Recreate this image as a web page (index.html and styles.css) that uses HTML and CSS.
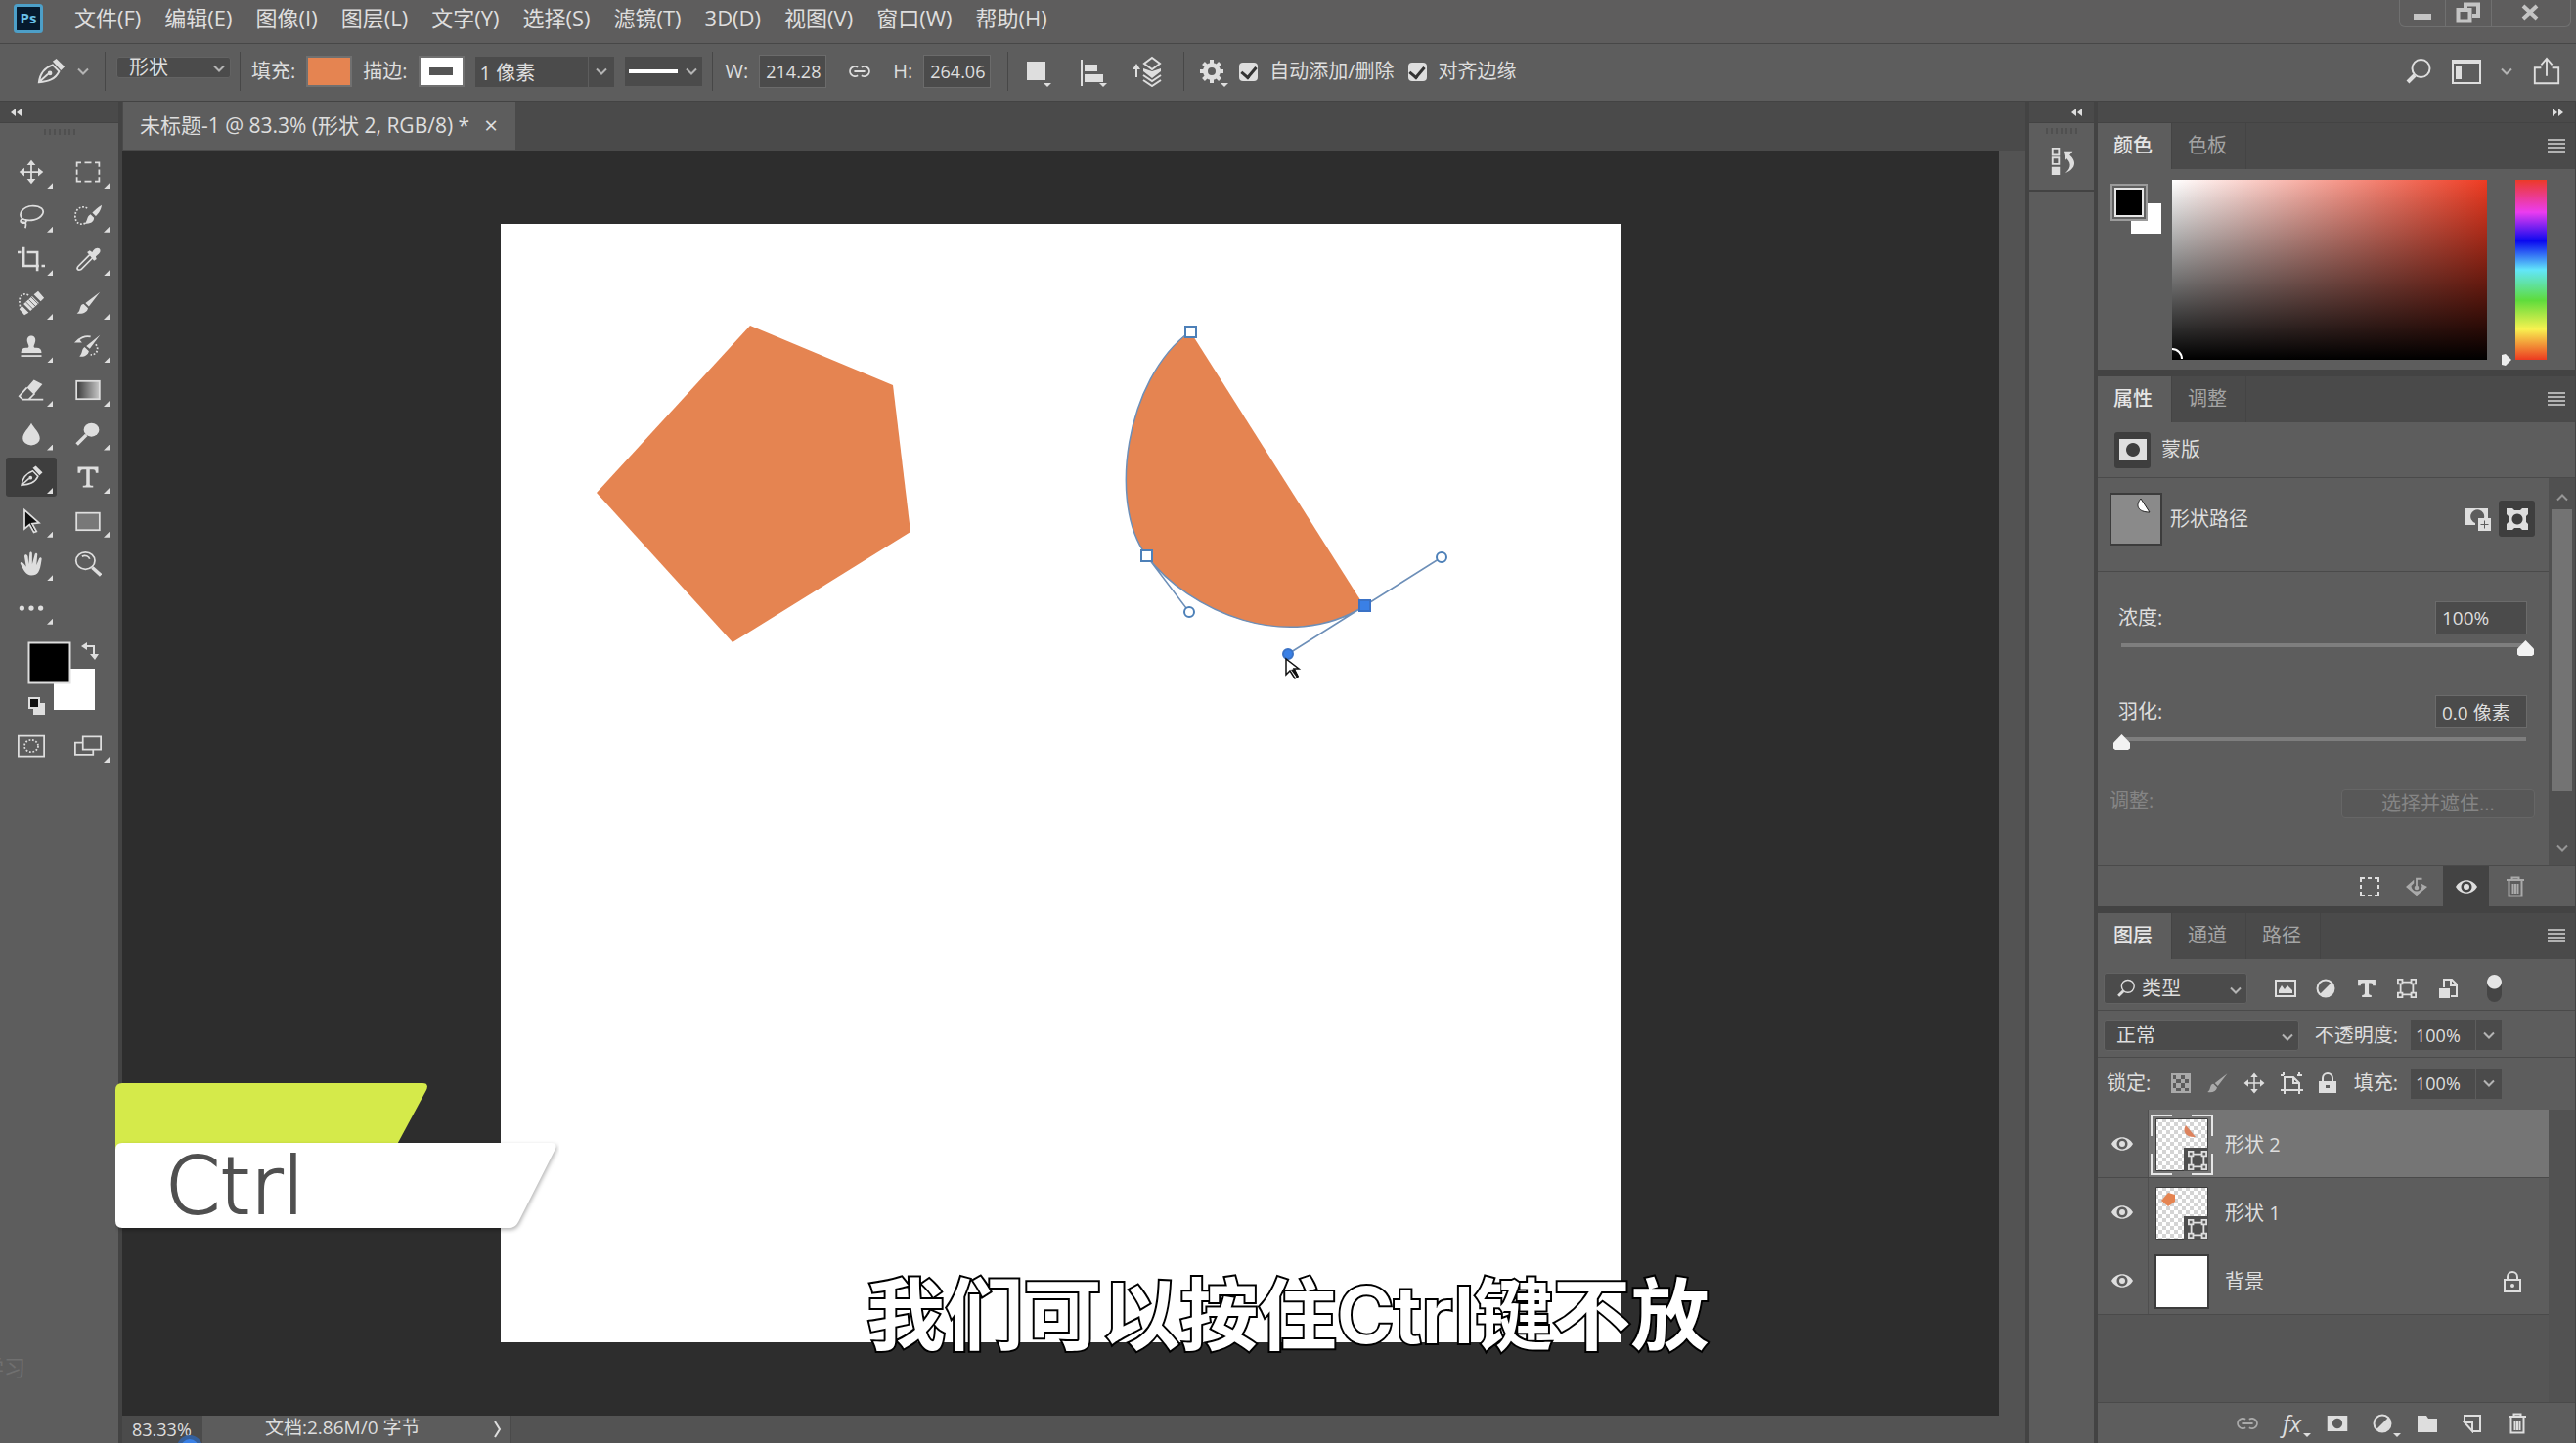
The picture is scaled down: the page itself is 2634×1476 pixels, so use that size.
FILE: index.html
```html
<!DOCTYPE html>
<html lang="zh-CN">
<head>
    <meta charset="UTF-8">
    <meta name="viewport" content="width=device-width, initial-scale=1.0">
    <title>未标题-1 @ 83.3%</title>
    <link rel="stylesheet" href="styles.css">
</head>
<body>
    <!-- shared icons -->
    <svg class="defs" aria-hidden="true">
        <symbol id="chevron" viewBox="0 0 12 8"><path d="M1 1.500l5 5 5-5"/></symbol>
        <symbol id="eye" viewBox="0 0 22 16"><path class="solid" fill-rule="evenodd" d="M0 8C5-1 17-1 22 8 17 17 5 17 0 8zM11 2.500a5.500 5.500 0 1 0 .01 0z"/><circle class="solid" cx="11" cy="8" r="3"/></symbol>
        <symbol id="trash" viewBox="0 0 20 22"><path d="M1 4h18M6.500 4V1.500h7V4M3.500 4.500V20.500h13V4.500M7.500 8v10M10 8v10M12.500 8v10"/></symbol>
        <symbol id="shape" viewBox="0 0 22 22"><path d="M4 4h14v14H4z"/><path class="box" d="M1 1h5v5H1zM16 1h5v5h-5zM1 16h5v5H1zM16 16h5v5h-5z"/></symbol>
        <symbol id="mask" viewBox="0 0 30 24"><path class="solid" fill-rule="evenodd" d="M1 1h28v22H1zM15 5a7 7 0 1 0 .01 0z"/></symbol>
        <symbol id="half" viewBox="0 0 20 20"><circle cx="10" cy="10" r="8.500"/><path class="solid" d="M16 4A8.500 8.500 0 0 1 4 16z"/></symbol>
        <symbol id="menu" viewBox="0 0 18 14"><path d="M0 1h18M0 5h18M0 9h18M0 13h18"/></symbol>
        <symbol id="brush" viewBox="0 0 32 32"><path class="solid" d="M30 3L17 20l-4-4zM11 17l5 5c-1 5-6 7-13 6 3-2 3-4 4-7 1-3 2-4 4-4z"/></symbol>
        <symbol id="move" viewBox="0 0 32 32"><path d="M16 6v20M6 16h20"/><path class="solid" d="M16 2l5 6H11zM16 30l5-6H11zM2 16l6-5v10zM30 16l-6-5v10z"/></symbol>
        <symbol id="pen" viewBox="0 0 32 32"><path d="M3 28C4 20 7 13 18 9l7 7c-4 9-12 11-22 12zM4 27l9-8"/><circle class="solid" cx="15" cy="18" r="2.500"/><path class="solid" d="M18 5l4-3 9 9-4 4z"/></symbol>
        <symbol id="search" viewBox="0 0 28 28"><circle cx="16.500" cy="11" r="9"/><path class="thick" d="M10 18l-7 7"/></symbol>
        <symbol id="link" viewBox="0 0 28 16"><path d="M12 3.500A5.500 5.500 0 1 0 12 12.500M16 3.500A5.500 5.500 0 1 1 16 12.500M8 8h12"/></symbol>
        <pattern id="checks" width="8" height="8" patternUnits="userSpaceOnUse"><path fill="#fff" d="M0 0h8v8H0z"/><path fill="#d4d4d4" d="M0 0h4v4H0zM4 4h4v4H4z"/></pattern>
    </svg>

    <header class="menu-bar">
        <svg class="logo" viewBox="0 0 30 30"><rect x="1.500" y="1.500" width="27" height="27" rx="2" fill="#06192d" stroke="#4d9fc8" stroke-width="3"/><text x="15" y="20" text-anchor="middle">Ps</text></svg>
        <nav class="menus">
            <button>文件(F)</button>
            <button>编辑(E)</button>
            <button>图像(I)</button>
            <button>图层(L)</button>
            <button>文字(Y)</button>
            <button>选择(S)</button>
            <button>滤镜(T)</button>
            <button>3D(D)</button>
            <button>视图(V)</button>
            <button>窗口(W)</button>
            <button>帮助(H)</button>
        </nav>
        <div class="window-buttons">
            <button aria-label="最小化"><svg class="icon" viewBox="0 0 26 22"><path class="solid" d="M4 12h18v6H4z"/></svg></button>
            <button aria-label="还原"><svg class="icon restore" viewBox="0 0 26 22"><path d="M10 8V2.500h13V14h-6M2.500 8h12v11.500h-12z"/></svg></button>
            <button aria-label="关闭"><svg class="icon restore" viewBox="0 0 26 22"><path d="M5 4l14 13M19 4L5 17"/></svg></button>
        </div>
    </header>

    <div class="options-bar">
        <div class="group pen-group">
            <button aria-label="钢笔工具"><svg class="icon size-30" viewBox="0 0 32 32"><use href="#pen"/></svg></button>
            <svg class="icon chevron"><use href="#chevron"/></svg>
        </div>
        <div class="group mode-group">
            <div class="drop">
                <select aria-label="模式"><option>形状</option></select>
                <svg class="icon chevron"><use href="#chevron"/></svg>
            </div>
        </div>
        <div class="group paint-group">
            <label for="fillColor">填充:</label>
            <button id="fillColor" class="swatch orange"></button>
            <label for="strokeColor">描边:</label>
            <button id="strokeColor" class="swatch line"></button>
            <div class="combo">
                <input type="text" aria-label="描边宽度" value="1 像素">
                <button aria-label="宽度列表"><svg class="icon chevron"><use href="#chevron"/></svg></button>
            </div>
            <button class="stroke-type" aria-label="描边选项"><i></i><svg class="icon chevron"><use href="#chevron"/></svg></button>
        </div>
        <div class="group size-group">
            <label for="shapeWidth">W:</label>
            <input type="text" id="shapeWidth" value="214.28">
            <button aria-label="链接宽高"><svg class="icon link"><use href="#link"/></svg></button>
            <label for="shapeHeight">H:</label>
            <input type="text" id="shapeHeight" value="264.06">
        </div>
        <div class="group path-group">
            <button aria-label="路径操作"><svg class="icon size-32" viewBox="0 0 32 32"><path class="solid" d="M4 6h19v19H4zM21 28h8l-4 4z"/></svg></button>
            <button aria-label="对齐"><svg class="icon size-32" viewBox="0 0 32 32"><path d="M5 4v27"/><path class="solid" d="M8 9h13v7H8zM8 19h19v8H8zM23 28h8l-4 4z"/></svg></button>
            <button aria-label="排列"><svg class="icon size-32" viewBox="0 0 32 32"><path d="M6 22V11M22 2l8 6-8 6-8-6zM13 20l9 6 9-6M13 25l9 6 9-6"/><path class="solid" d="M6 8l4 6H2zM13 13l9 3 9-3v3l-9 7-9-7z"/></svg></button>
        </div>
        <div class="group check-group">
            <button aria-label="选项"><svg class="icon size-32" viewBox="0 0 32 32"><circle class="gear" cx="14" cy="16" r="6.500"/><path class="teeth" d="M14 4v5M14 23v5M2 16h5M21 16h5M5.500 7.500L9 11M19 21l3.500 3.500M22.500 7.500L19 11M9 21l-3.500 3.500"/><path class="solid" d="M23 28h8l-4 4z"/></svg></button>
            <label><input type="checkbox" checked>自动添加/删除</label>
            <label><input type="checkbox" checked>对齐边缘</label>
        </div>
        <div class="view-buttons">
            <button aria-label="搜索"><svg class="icon size-28"><use href="#search"/></svg></button>
            <button aria-label="工作区"><svg class="icon size-30" viewBox="0 0 30 26"><path d="M1 2h28v23H1zM1 4h28"/><path class="solid" d="M4 7h6v14H4z"/></svg></button>
            <svg class="icon chevron"><use href="#chevron"/></svg>
            <button aria-label="共享"><svg class="icon size-30" viewBox="0 0 30 32"><path d="M9 12H2v17h26V12h-7M15 21V3M9 9l6-7 6 7"/></svg></button>
        </div>
    </div>

    <main class="workspace">
        <aside class="dock">
            <div class="dock-head left"><svg class="icon arrows" viewBox="0 0 12 8"><path class="solid" d="M5 0v8L0 4zM11 0v8L6 4z"/></svg></div>
            <div class="tools">
                <div class="grip"></div>
                <div class="tool-grid">
                    <button class="tool" aria-label="移动"><svg class="icon"><use href="#move"/></svg></button>
                    <button class="tool" aria-label="选框"><svg class="icon" viewBox="0 0 32 32"><path d="M3 10V5h5M12 5h8M24 5h5v5M29 13v6M29 22v5h-5M20 27h-8M8 27H3v-5M3 19v-6"/></svg></button>
                    <button class="tool" aria-label="套索"><svg class="icon" viewBox="0 0 32 32"><path d="M6 20C0 14 5 5 18 4c9 0 14 5 11 10-4 7-15 8-21 6M8 20c-5-2-6 4-2 4 4 1 6-3 2-4M5 23c6 0 5 3 4 7"/></svg></button>
                    <button class="tool" aria-label="快速选择"><svg class="icon" viewBox="0 0 32 32"><path class="dots" d="M15 7C10 3 1 7 1 16s7 11 12 8"/><path class="solid" d="M32 3c-1 7-4 10-7 13l-4-4c3-3 6-6 11-9zM19 14l4 4c0 5-4 7-11 7 4-4 2-8 7-11z"/></svg></button>
                    <button class="tool" aria-label="裁剪"><svg class="icon crop" viewBox="0 0 32 32"><path d="M0 8h4M7 2v22h18M11 8h12v22M28 24h4"/></svg></button>
                    <button class="tool" aria-label="吸管"><svg class="icon" viewBox="0 0 32 32"><path d="M18 11L5 24c-3 3-1 6 3 4l14-14"/><path class="solid" d="M15 8l3-2 3 2c3-7 11-6 9 0-2 3-4 4-5 5l1 3-3 2z"/></svg></button>
                    <button class="tool" aria-label="修复画笔"><svg class="icon" viewBox="0 0 32 32"><path class="dots" d="M3 20C0 8 6 3 13 7"/><path class="solid" d="M24 2l7 8-4 4-8-8zM17 8l8 8-10 9-8-8zM5 19l8 8-5 3-6-7z"/><path class="cut" d="M13 12l8 8M16 9l8 8M10 15l8 8"/></svg></button>
                    <button class="tool" aria-label="画笔"><svg class="icon"><use href="#brush"/></svg></button>
                    <button class="tool" aria-label="仿制图章"><svg class="icon" viewBox="0 0 32 32"><path class="solid" d="M12 13c-5-12 13-12 8 0-2 4-1 5 2 5 4 0 6 2 6 6H4c0-4 2-6 6-6 3 0 4-1 2-5z"/><path d="M4 27.500h24"/></svg></button>
                    <button class="tool" aria-label="历史记录画笔"><svg class="icon" viewBox="0 0 32 32"><path class="solid" d="M30 3L18 19l-4-3zM12 17l5 5c-1 5-6 7-11 6 4-4 2-8 6-11zM0 12l5-5 4 5z"/><path d="M5 9c4-4 9-5 14-4"/><path class="dots" d="M25 14c5 6 0 13-6 12"/></svg></button>
                    <button class="tool" aria-label="橡皮擦"><svg class="icon" viewBox="0 0 32 32"><path class="solid" d="M19 4l10 5-10 12-8-8z"/><path d="M11 13l-9 10 4 4h7l7-7M10 27h20"/></svg></button>
                    <button class="tool" aria-label="渐变"><svg class="icon" viewBox="0 0 32 32"><defs><linearGradient id="toneFill"><stop offset="0" stop-color="#3a3a3a"/><stop offset="1" stop-color="#c8c8c8"/></linearGradient></defs><rect x="2.500" y="5.500" width="27" height="21" fill="url(#toneFill)"/></svg></button>
                    <button class="tool" aria-label="模糊"><svg class="icon" viewBox="0 0 32 32"><path class="solid" d="M16 3c3 6 10 11 10 18a10 8 0 0 1-20 0C6 14 13 9 16 3z"/></svg></button>
                    <button class="tool" aria-label="减淡"><svg class="icon" viewBox="0 0 32 32"><ellipse class="solid" cx="20" cy="11" rx="9" ry="8"/><path class="thick" d="M14 17L3 28"/></svg></button>
                    <button class="tool active" aria-label="钢笔"><svg class="icon" viewBox="0 0 32 32"><use href="#pen" x="2" y="1" width="28" height="28"/></svg></button>
                    <button class="tool" aria-label="文字"><svg class="icon" viewBox="0 0 32 32"><path class="solid" d="M4 4h24v7h-3c0-3-1-4-3-4h-4v17c0 2 1 2 4 2v2H10v-2c3 0 4 0 4-2V7h-4c-2 0-3 1-3 4H4z"/></svg></button>
                    <button class="tool" aria-label="路径选择"><svg class="icon" viewBox="0 0 32 32"><path class="arrow" d="M8 3l17 15-8 1 5 9-3 1-5-9-6 5z"/></svg></button>
                    <button class="tool" aria-label="矩形"><svg class="icon" viewBox="0 0 32 32"><rect x="2.500" y="6.500" width="27" height="20" fill="#787878"/></svg></button>
                    <button class="tool" aria-label="抓手"><svg class="icon" viewBox="0 0 32 32"><path class="solid" d="M3 15c1-3 4 0 7 4L8 7c0-3 3-3 4 0l1 9 1-12c0-3 3-3 3 0v12l3-11c1-3 4-2 3 1l-1 11 3-7c1-3 4-2 3 1-2 14-4 18-12 18-6 0-9-6-13-14z"/></svg></button>
                    <button class="tool plain" aria-label="缩放"><svg class="icon" viewBox="0 0 32 32"><ellipse cx="13" cy="12" rx="11" ry="10"/><path d="M9 7c4-2 8 0 9 3"/><path class="thick" d="M21 20l10 9"/></svg></button>
                    <button class="tool" aria-label="更多"><svg class="icon" viewBox="0 0 32 32"><g class="solid"><circle cx="5" cy="16" r="3"/><circle cx="16" cy="16" r="3"/><circle cx="27" cy="16" r="3"/></g></svg></button>
                </div>
                <svg class="icon tool-colors" viewBox="0 0 121 80">
                    <path fill="#fff" stroke="none" d="M55 31h42v42H55z"/>
                    <path fill="#000" d="M29.500 4.500h42v41h-42z"/>
                    <path d="M87 8h9v10"/><path class="solid" d="M83 8l6-4v8zM92 16h9l-4 6z"/>
                    <path class="solid" d="M34 66h12v12H34z"/><path fill="#111" d="M30 61h10v10H30z"/>
                </svg>
                <div class="screen-tools">
                    <button class="tool plain" aria-label="快速蒙版"><svg class="icon" viewBox="0 0 32 32"><path d="M1 4h30v24H1z"/><ellipse class="dots" cx="16" cy="16" rx="8" ry="7"/></svg></button>
                    <button class="tool" aria-label="屏幕模式"><svg class="icon" viewBox="0 0 32 32"><path d="M10 12H1v14h21v-5M10 5h21v15H10z"/></svg></button>
                </div>
            </div>
        </aside>

        <section class="document">
            <div class="doc-tabs">
                <div class="doc-tab"><span>未标题-1 @ 83.3% (形状 2, RGB/8) *</span><button aria-label="关闭文档">×</button></div>
            </div>
            <div class="stage">
                <div class="canvas">
                    <svg class="artboard" viewBox="0 -1 1145 1144">
                        <path class="fill" d="M255 103l146 61 18 150-182 113L98 274z"/>
                        <path class="fill" d="M705 109C638 158 621 286 660 338 704 396 805 439 883 390z"/>
                        <path class="path-line" d="M705 109C638 158 621 286 660 338 704 396 805 439 883 390M660 338l44 58M805 439L962 340"/>
                        <path class="anchor" d="M700 104h11v11h-11zM655 333h11v11h-11z"/>
                        <path class="anchor on" d="M878 384h11v11h-11z"/>
                        <circle class="anchor" cx="704" cy="396" r="5"/>
                        <circle class="anchor" cx="962" cy="340" r="5"/>
                        <circle class="anchor on" cx="805" cy="439" r="5"/>
                        <path class="cursor" d="M803 444v16l4-4 5 8 3-2-4-8h5z"/>
                        <path class="cursor-fill" d="M808 455l6 8 2-1-4-8z"/>
                    </svg>
                </div>
                <div class="stage-scroll"></div>
            </div>
            <footer class="status-bar">
                <input type="text" aria-label="缩放比例" value="83.33%">
                <span class="doc-size">文档:2.86M/0 字节</span>
                <button aria-label="状态选项"><svg class="icon" viewBox="0 0 8 18"><path d="M1 1l5 8-5 8"/></svg></button>
            </footer>
        </section>

        <aside class="dock">
            <div class="dock-head right"><svg class="icon arrows" viewBox="0 0 12 8"><path class="solid" d="M5 0v8L0 4zM11 0v8L6 4z"/></svg></div>
            <div class="history">
                <div class="grip"></div>
                <button aria-label="历史记录"><svg class="icon size-30" viewBox="0 0 30 32"><path d="M3 2h7v7H3zM3 12h7v7H3z"/><path class="solid" d="M2 22h9v9H2zM15 5h10l-8 10zM20 8c10 7 9 16-3 21 7-6 7-12-1-18z"/></svg></button>
            </div>
            <div class="filler"></div>
        </aside>

        <aside class="dock">
            <div class="dock-head right"><svg class="icon arrows" viewBox="0 0 12 8"><path class="solid" d="M0 0v8l5-4zM6 0v8l5-4z"/></svg></div>

            <section class="panel color-panel">
                <div class="tabs"><button class="on">颜色</button><button>色板</button><button class="panel-menu" aria-label="面板菜单"><svg class="icon"><use href="#menu"/></svg></button></div>
                <div class="picker">
                    <svg class="picker-swatch" viewBox="0 0 52 52"><path fill="#fff" d="M21 20h31v31H21z"/><path fill="#606060" stroke="#9b9b9b" stroke-width="2" d="M1 1h36v36H1z"/><path fill="#000" stroke="#e6e6e6" stroke-width="2" d="M5 5h28v28H5z"/></svg>
                    <div class="field"><svg viewBox="0 0 12 12"><path d="M0 1a10 10 0 0 1 10 10"/></svg></div>
                    <div class="hue"><svg viewBox="0 0 10 12"><path d="M0 1l4-1 6 6-6 6-4-1z"/></svg></div>
                </div>
            </section>

            <section class="panel">
                <div class="tabs"><button class="on">属性</button><button>调整</button><button class="panel-menu" aria-label="面板菜单"><svg class="icon"><use href="#menu"/></svg></button></div>
                <div class="prop-title"><span class="dark-box"><svg class="icon mask"><use href="#mask"/></svg></span>蒙版</div>
                <div class="prop-wrap">
                    <div class="prop-body">
                        <div class="prop-path">
                            <svg class="path-thumb" viewBox="0 0 54 54"><path fill="#8a8a8a" stroke="#3c3c3c" stroke-width="2" d="M1 1h52v52H1z"/><path fill="#fff" stroke="#222" d="M32 6c-6 7-3 14 9 14z"/></svg>
                            <span>形状路径</span>
                            <button aria-label="添加像素蒙版"><svg class="icon size-28" viewBox="0 0 28 28"><path class="solid" fill-rule="evenodd" d="M1 3h24v10h-4a7 7 0 1 0-9 5v2H1z"/><path class="solid" d="M15 13h13v13H15z"/><path class="cut" d="M21.500 15.500v8M17.500 19.500h8"/></svg></button>
                            <button class="dark-box" aria-label="选择矢量蒙版"><svg class="icon size-28" viewBox="0 0 28 28"><path class="solid" fill-rule="evenodd" d="M3 3h6l2 2h6l2-2h6v6l-2 2v6l2 2v6h-6l-2-2h-6l-2 2H3v-6l2-2v-6L3 9zM14 8.500a5.500 5.500 0 1 0 .01 0z"/></svg></button>
                        </div>
                        <div class="slider-row">
                            <div><label for="density">浓度:</label><input type="text" aria-label="浓度数值" value="100%"></div>
                            <input type="range" id="density" min="0" max="100" value="100">
                        </div>
                        <div class="slider-row">
                            <div><label for="feather">羽化:</label><input type="text" aria-label="羽化数值" value="0.0 像素"></div>
                            <input type="range" id="feather" min="0" max="100" value="0">
                        </div>
                        <div class="refine"><span>调整:</span><button disabled>选择并遮住...</button></div>
                    </div>
                    <div class="scroll">
                        <svg class="icon chevron up"><use href="#chevron"/></svg>
                        <i></i>
                        <svg class="icon chevron"><use href="#chevron"/></svg>
                    </div>
                </div>
                <div class="prop-foot">
                    <button aria-label="载入选区"><svg class="icon size-22" viewBox="0 0 22 22"><path d="M2 6V2h4M9 2h4M16 2h4v4M20 9v4M20 16v4h-4M13 20H9M6 20H2v-4M2 13V9"/></svg></button>
                    <button class="dim" aria-label="应用蒙版"><svg class="icon size-22" viewBox="0 0 24 22"><path class="solid" d="M0 11l9-8v4l-3 3a6 6 0 1 0 12 0l-2-3 8 4-12 10z"/><path d="M12 13V2h6"/><circle class="solid" cx="12" cy="12" r="2.500"/></svg></button>
                    <button class="seen" aria-label="切换蒙版"><svg class="icon eye"><use href="#eye"/></svg></button>
                    <button class="dim" aria-label="删除蒙版"><svg class="icon trash"><use href="#trash"/></svg></button>
                </div>
            </section>

            <section class="panel layers">
                <div class="tabs"><button class="on">图层</button><button>通道</button><button>路径</button><button class="panel-menu" aria-label="面板菜单"><svg class="icon"><use href="#menu"/></svg></button></div>
                <div class="layer-row filter-row">
                    <div class="drop kind">
                        <svg class="icon find"><use href="#search"/></svg>
                        <select aria-label="滤镜类型"><option>类型</option></select>
                        <svg class="icon chevron"><use href="#chevron"/></svg>
                    </div>
                    <div class="filters">
                        <button aria-label="像素图层"><svg class="icon size-22" viewBox="0 0 22 20"><path d="M1 2h20v16H1z"/><path class="solid" d="M4 15v-3l3-5 3 4 3-4 5 5v3z"/></svg></button>
                        <button aria-label="调整图层"><svg class="icon size-20"><use href="#half"/></svg></button>
                        <button aria-label="文字图层"><svg class="icon size-22" viewBox="0 0 32 32"><path class="solid" d="M3 3h26v9h-4c0-3-1-4-3-4h-3v15c0 2 1 3 4 3v3H9v-3c3 0 4-1 4-3V8h-3c-2 0-3 1-3 4H3z"/></svg></button>
                        <button aria-label="形状图层"><svg class="icon size-20"><use href="#shape"/></svg></button>
                        <button aria-label="智能对象"><svg class="icon size-22" viewBox="0 0 22 22"><path d="M7 10V2h8l5 5v12h-6M14 2v6h6"/><path class="solid" d="M2 11h11v10H2z"/></svg></button>
                        <button class="toggle" aria-label="滤镜开关"></button>
                    </div>
                </div>
                <div class="layer-row">
                    <div class="drop blend">
                        <select aria-label="混合模式"><option>正常</option></select>
                        <svg class="icon chevron"><use href="#chevron"/></svg>
                    </div>
                    <label class="value-label" for="opacity">不透明度:</label>
                    <div class="combo small"><input type="text" id="opacity" value="100%"><button aria-label="不透明度列表"><svg class="icon chevron"><use href="#chevron"/></svg></button></div>
                </div>
                <div class="layer-row last">
                    <span class="lock-label">锁定:</span>
                    <div class="locks">
                        <button class="dim" aria-label="锁定透明像素"><svg class="icon size-22" viewBox="0 0 22 22"><path d="M2 2h18v18H2z"/><path class="solid" d="M6 2h5v5H6zM15 2h5v5h-5zM2 7h4v4H2zM11 7h4v4h-4zM6 11h5v5H6zM15 11h5v5h-5zM2 16h4v4H2zM11 16h4v4h-4z"/></svg></button>
                        <button class="dim" aria-label="锁定图像像素"><svg class="icon size-24"><use href="#brush"/></svg></button>
                        <button aria-label="锁定位置"><svg class="icon size-24"><use href="#move"/></svg></button>
                        <button aria-label="锁定画板"><svg class="icon size-24" viewBox="0 0 24 24"><path d="M4 1v3M1 4h3M5 23v-3M1 19h4M5 19V6h9l6 6v7zM14 6v6h6M18 4h5M20 1v4M20 19h4M20 19v4"/></svg></button>
                        <button aria-label="锁定全部"><svg class="icon size-22" viewBox="0 0 22 22"><path d="M6 9V6a5 5 0 0 1 10 0v3"/><path class="solid" fill-rule="evenodd" d="M2 9h18v12H2zM9 13v3h4v-3z"/></svg></button>
                    </div>
                    <label class="value-label" for="fillValue">填充:</label>
                    <div class="combo small"><input type="text" id="fillValue" value="100%"><button aria-label="填充列表"><svg class="icon chevron"><use href="#chevron"/></svg></button></div>
                </div>
                <div class="layer-wrap">
                    <ul class="layer-list">
                        <li>
                            <button class="see" aria-label="可见"><svg class="icon eye"><use href="#eye"/></svg></button>
                            <div class="layer selected">
                                <svg class="thumb" viewBox="0 0 64 62"><path fill="url(#checks)" stroke="#3c3c3c" d="M5.500 4.500h53v53h-53z"/><path fill="#dc825d" d="M36 11c-4 6 0 13 10 12z"/><path fill="#4e4e4e" d="M34 34h25v24H34z"/><path class="corner" d="M1 22V1h21M42 1h21v21M63 40v21H42M22 61H1V40"/><svg class="icon" x="38" y="37" width="20" height="20"><use href="#shape"/></svg></svg>
                                <span>形状 2</span>
                            </div>
                        </li>
                        <li>
                            <button class="see" aria-label="可见"><svg class="icon eye"><use href="#eye"/></svg></button>
                            <div class="layer">
                                <svg class="thumb" viewBox="0 0 64 62"><path fill="url(#checks)" stroke="#3c3c3c" d="M5.500 4.500h53v53h-53z"/><path fill="#e58451" d="M18 10l7 2v7l-7 5-7-6z"/><path fill="#4e4e4e" d="M34 34h25v24H34z"/><svg class="icon" x="38" y="37" width="20" height="20"><use href="#shape"/></svg></svg>
                                <span>形状 1</span>
                            </div>
                        </li>
                        <li>
                            <button class="see" aria-label="可见"><svg class="icon eye"><use href="#eye"/></svg></button>
                            <div class="layer">
                                <svg class="thumb" viewBox="0 0 64 62"><path fill="#fff" stroke="#3c3c3c" stroke-width="2" d="M5 4h54v54H5z"/></svg>
                                <span>背景</span>
                                <svg class="icon size-22 locked" viewBox="0 0 22 22"><path d="M6 9V6a5 5 0 0 1 10 0v3M3 9h16v12H3z"/><circle class="solid" cx="11" cy="15" r="2"/></svg>
                            </div>
                        </li>
                    </ul>
                    <div class="layer-scroll"></div>
                </div>
                <div class="layer-foot">
                    <button class="dim" aria-label="链接图层"><svg class="icon link"><use href="#link"/></svg></button>
                    <button class="fx has-menu">fx</button>
                    <button aria-label="添加蒙版"><svg class="icon size-22"><use href="#mask"/></svg></button>
                    <button class="has-menu" aria-label="调整图层"><svg class="icon size-20"><use href="#half"/></svg></button>
                    <button aria-label="新建组"><svg class="icon size-22" viewBox="0 0 22 20"><path class="solid" d="M1 2h9l2 3h9v14H1z"/></svg></button>
                    <button aria-label="新建图层"><svg class="icon size-20" viewBox="0 0 20 20"><path d="M2 9V2h16v16h-7M2 9h8v9z"/></svg></button>
                    <button aria-label="删除图层"><svg class="icon trash"><use href="#trash"/></svg></button>
                </div>
            </section>
        </aside>
    </main>

    <!-- lesson overlays -->
    <div class="key-tag">
        <svg viewBox="0 0 454 154">
            <path fill="#d5ea4a" d="M0 70V7q0-7 7-7h307q7 0 4 7l-34 63z"/>
            <path class="card" fill="#fff" d="M0 68q0-7 7-7h439q6 0 4 6l-38 75q-3 6-10 6H7q-7 0-7-7z"/>
        </svg>
        <span>Ctrl</span>
    </div>
    <div class="caption">我们可以按住Ctrl键不放</div>
    <div class="watermark">学习</div>
    <div class="play-dot"></div>
</body>
</html>
```

FILE: styles.css
```css
* {
    box-sizing: border-box;
}
body {
    margin: 0;
    height: 100vh;
    display: flex;
    flex-direction: column;
    position: relative;
    overflow: hidden;
    background: #434343;
    color: #dedede;
    font-family: "Open Sans", "Noto Sans CJK SC", sans-serif;
    font-size: 20px;
    line-height: 24px;
}
button, input, select {
    font: inherit;
    color: inherit;
    margin: 0;
    padding: 0;
    border: 0;
    background: none;
    border-radius: 0;
}
button {
    display: flex;
    align-items: center;
    justify-content: center;
}
.defs {
    position: absolute;
    width: 0;
    height: 0;
}

/* icons */
.icon {
    display: block;
    flex: none;
    fill: none;
    stroke: #dedede;
    stroke-width: 2;
    color: #dedede;
}
.solid { fill: #dedede; stroke: none; }
.thick { stroke-width: 4; }
.dots { stroke-dasharray: 2 2; }
.cut { stroke: #5c5c5c; stroke-width: 1; }
.box { fill: #5c5c5c; }
.gear { stroke-width: 5; }
.teeth { stroke-width: 4; }
.crop { stroke-width: 3; }
.arrow { fill: #111; }
.dim { opacity: 0.6; }
.size-20 { width: 20px; height: 20px; }
.size-22 { width: 22px; height: 22px; }
.size-24 { width: 24px; height: 24px; }
.size-28 { width: 28px; height: 28px; }
.size-30 { width: 30px; height: 30px; }
.size-32 { width: 32px; height: 32px; }
.chevron { width: 12px; height: 8px; stroke: #b4b4b4; }
.link { width: 26px; height: 16px; }
.mask { width: 30px; height: 24px; }
.eye { width: 22px; height: 16px; }
.trash { width: 20px; height: 22px; }

/* menu bar */
.menu-bar {
    height: 44px;
    display: flex;
    background: #5e5d5d;
    padding-left: 14px;
}
.logo {
    width: 30px;
    height: 30px;
    margin-top: 4px;
}
.logo text {
    fill: #69c0e8;
    font-size: 15px;
    font-weight: 700;
}
.menus {
    display: flex;
    gap: 24px;
    height: 36px;
    margin-left: 32px;
    font-size: 22px;
}
.window-buttons {
    display: flex;
    height: 28px;
    margin: 0 5px 0 auto;
    border: 1px solid #707070;
    border-top: 0;
    border-radius: 0 0 6px 6px;
}
.window-buttons button {
    width: 47px;
    padding-bottom: 2px;
    border-right: 1px solid #707070;
}
.window-buttons button:last-child {
    width: 80px;
    border: 0;
}
.window-buttons .icon {
    width: 26px;
    height: 22px;
    opacity: 0.8;
}
.restore { stroke-width: 4; }

/* options bar */
.options-bar {
    height: 59px;
    display: flex;
    align-items: center;
    padding-bottom: 2px;
    background: #5d5d5d;
    border-top: 1px solid #474747;
    margin-bottom: 1px;
}
.group {
    height: 40px;
    display: flex;
    align-items: center;
    border-right: 1px solid #474747;
}
.pen-group {
    gap: 12px;
    padding: 0 16px 0 37px;
}
.mode-group { padding: 0 9px 0 11px; }
.paint-group {
    gap: 11px;
    padding: 0 10px 0 11px;
}
.size-group {
    gap: 11px;
    padding: 0 17px 0 13px;
}
.size-group button { margin: 0 10px; }
.size-group input {
    width: 69px;
    height: 34px;
    padding-left: 6px;
    background: #4b4b4b;
    border: 1px solid #6b6b6b;
    font-size: 18px;
}
.path-group {
    gap: 23px;
    padding: 0 22px 0 15px;
}
.check-group {
    gap: 14px;
    padding-left: 14px;
    border: 0;
}
.check-group button { margin-right: -4px; }
.check-group label {
    display: flex;
    align-items: center;
    gap: 12px;
}
input[type="checkbox"] {
    appearance: none;
    width: 19px;
    height: 19px;
    display: flex;
    justify-content: center;
    background: #dedede;
    border-radius: 4px;
}
input[type="checkbox"]::before {
    content: "";
    width: 7px;
    height: 12px;
    margin-top: 1px;
    border: solid #333;
    border-width: 0 3px 3px 0;
    transform: rotate(40deg);
}
.view-buttons {
    display: flex;
    align-items: center;
    gap: 20px;
    margin: 0 15px 0 auto;
}
.drop {
    position: relative;
    height: 32px;
    display: flex;
    align-items: center;
    background: #4b4b4b;
    border: 1px solid #636363;
    border-radius: 3px;
}
.drop select {
    appearance: none;
    width: 100%;
    height: 30px;
    padding-left: 12px;
    outline: 0;
}
.drop .chevron {
    position: absolute;
    right: 5px;
    bottom: 9px;
}
.mode-group .drop {
    width: 117px;
    height: 22px;
    margin-bottom: 9px;
}
.mode-group .chevron { bottom: 5px; }
.mode-group select { height: 22px; line-height: 20px; }
.swatch {
    width: 47px;
    height: 32px;
    border: 2px solid #707070;
}
.orange { background: #e58451; }
.line {
    background: linear-gradient(#555, #555) center / 24px 8px no-repeat #fff;
}
.combo {
    display: flex;
    gap: 1px;
}
.combo input {
    width: 115px;
    height: 31px;
    padding-left: 5px;
    background: #4b4b4b;
}
.combo button {
    width: 26px;
    height: 31px;
    background: #4b4b4b;
}
.combo.small input { width: 66px; font-size: 18px; }
.stroke-type {
    width: 79px;
    height: 30px;
    gap: 8px;
    background: #4b4b4b;
}
.stroke-type i {
    width: 50px;
    height: 4px;
    background: #fff;
}

/* workspace */
.workspace {
    flex: 1;
    min-height: 0;
    display: grid;
    grid-template-columns: 121px minmax(0, 1fr) 66px 488px;
    gap: 4px;
    padding-right: 1px;
}
.dock {
    display: flex;
    flex-direction: column;
    min-height: 0;
}
.dock-head {
    height: 21px;
    flex: none;
    display: flex;
    align-items: center;
    padding: 0 11px;
    background: #4a4a4a;
    margin-bottom: 1px;
}
.dock-head.right { justify-content: flex-end; }
.arrows { width: 12px; height: 8px; }
.grip {
    width: 32px;
    height: 6px;
    margin: 0 auto;
    background: repeating-linear-gradient(90deg, #505050 0 2px, #5c5c5c 2px 5px);
}
.tools {
    flex: 1;
    background: #5d5d5d;
    padding-top: 6px;
}
.tool-grid {
    display: grid;
    grid-template-columns: 58px 58px;
    grid-template-rows: repeat(11, 1fr);
    height: 490px;
    padding-left: 3px;
    margin-top: 16px;
    align-items: center;
    justify-items: center;
}
.tool {
    position: relative;
    width: 52px;
    height: 40px;
    border-radius: 3px;
}
.tool .icon {
    width: 28px;
    height: 28px;
}
.tool::after {
    content: "";
    position: absolute;
    right: 4px;
    bottom: 3px;
    width: 6px;
    height: 6px;
    background: #dedede;
    clip-path: polygon(100% 0, 100% 100%, 0 100%);
}
.tool.plain::after { display: none; }
.tool.active { background: #3e3e3e; }
.tool-colors {
    width: 121px;
    height: 80px;
    margin-top: 9px;
}
.screen-tools {
    display: flex;
    gap: 6px;
    padding-left: 6px;
    margin-top: 10px;
}

/* document */
.document {
    display: flex;
    flex-direction: column;
    min-width: 0;
    min-height: 0;
}
.doc-tabs {
    height: 50px;
    flex: none;
    background: #4a4a4a;
    display: flex;
}
.doc-tab {
    height: 49px;
    display: flex;
    align-items: center;
    gap: 15px;
    padding: 0 18px 2px 17px;
    margin-left: 1px;
    background: #5d5d5d;
    font-size: 21px;
}
.doc-tab button { font-size: 24px; }
.stage {
    flex: 1;
    min-height: 0;
    display: flex;
}
.canvas {
    flex: 1;
    display: flex;
    align-items: center;
    justify-content: center;
    background: #2d2d2d;
}
.artboard {
    width: 1145px;
    height: 1144px;
    background: #fff;
}
.fill { fill: #e58451; }
.path-line { fill: none; stroke: #6d8fb8; stroke-width: 1.5; }
.anchor { fill: #fff; stroke: #4d80b8; stroke-width: 2; }
.anchor.on { fill: #3a80e6; stroke: #3a72c6; }
.cursor { fill: #fff; stroke: #111; stroke-width: 1.5; }
.cursor-fill { fill: #111; }
.stage-scroll {
    width: 27px;
    background: #535353;
}
.status-bar {
    height: 28px;
    flex: none;
    display: flex;
    background: #535353;
    font-size: 19px;
}
.status-bar input {
    width: 82px;
    padding-left: 10px;
    background: #4b4b4b;
    font-size: 18px;
}
.doc-size {
    width: 290px;
    padding-left: 64px;
    background: #5c5c5c;
}
.status-bar button {
    width: 25px;
    background: #5c5c5c;
    border-right: 1px solid #4a4a4a;
}
.status-bar .icon { width: 8px; height: 18px; }

.history {
    height: 68px;
    background: #5d5d5d;
    padding-top: 5px;
    margin-bottom: 2px;
}
.history button { width: 60px; height: 42px; margin: 7px 0 0 5px; }
.filler {
    flex: 1;
    background: #5c5c5c;
}

/* panels */
.panel {
    display: flex;
    flex-direction: column;
    background: #5d5d5d;
    margin-bottom: 7px;
}
.tabs {
    height: 47px;
    flex: none;
    display: flex;
    background: #4a4a4a;
}
.tabs button {
    width: 76px;
    padding: 0 3px 2px 0;
    color: #a4a4a4;
    border-right: 1px solid #444;
}
.tabs .on {
    background: #5d5d5d;
    color: #e6e6e6;
    font-weight: 500;
}
.tabs .panel-menu {
    width: 18px;
    padding: 0;
    margin: 0 10px 2px auto;
    border: 0;
}
.panel-menu .icon {
    width: 18px;
    height: 14px;
    opacity: 0.7;
}
.picker {
    display: flex;
    padding: 11px 29px 10px 13px;
    height: 205px;
}
.picker-swatch {
    width: 52px;
    height: 52px;
    margin-top: 4px;
}
.field {
    position: relative;
    flex: 1;
    height: 184px;
    margin: 0 29px 0 11px;
    background: linear-gradient(to top, #000, transparent), linear-gradient(to right, #fff, #ee3b22);
}
.field svg {
    position: absolute;
    left: 0;
    bottom: 0;
    width: 12px;
    height: 12px;
    fill: none;
    stroke: #fff;
    stroke-width: 2;
}
.hue {
    position: relative;
    width: 32px;
    height: 184px;
    background: linear-gradient(#ec3a28, #eb3cf0 18%, #0a08f0 34%, #62e6fa 50%, #5edc3c 67%, #f8f250 83%, #ec3a20);
}
.hue svg {
    position: absolute;
    left: -14px;
    bottom: -6px;
    width: 10px;
    height: 12px;
    fill: #eee;
}
.prop-title {
    height: 57px;
    display: flex;
    align-items: center;
    gap: 11px;
    padding-left: 17px;
    border-bottom: 1px solid #4a4a4a;
}
.dark-box {
    width: 37px;
    height: 37px;
    display: flex;
    align-items: center;
    justify-content: center;
    background: #3e3e3e;
    border-radius: 3px;
}
.prop-wrap { display: flex; }
.prop-body {
    flex: 1;
    height: 396px;
}
.prop-path {
    height: 96px;
    display: flex;
    align-items: center;
    gap: 8px;
    padding: 0 14px 12px 12px;
    border-bottom: 1px solid #4a4a4a;
    margin-bottom: 30px;
}
.prop-path span { flex: 1; }
.path-thumb { width: 54px; height: 54px; }
.slider-row {
    height: 96px;
    padding: 0 22px 0 21px;
}
.slider-row div {
    display: flex;
    justify-content: space-between;
    align-items: center;
}
.slider-row input[type="text"] {
    width: 94px;
    height: 34px;
    padding-left: 6px;
    background: #4b4b4b;
    border: 1px solid #6b6b6b;
    font-size: 19px;
}
.slider-row input[type="range"] {
    appearance: none;
    display: block;
    width: calc(100% + 12px);
    height: 18px;
    margin-left: -5px;
    margin-top: 5px;
    background: linear-gradient(#7e7e7e, #7e7e7e) 8px 4px / calc(100% - 16px) 4px no-repeat;
}
.slider-row input[type="range"]::-webkit-slider-thumb {
    appearance: none;
    width: 17px;
    height: 16px;
    background: #f2f2f2;
    clip-path: polygon(50% 0, 100% 55%, 100% 90%, 88% 100%, 12% 100%, 0 90%, 0 55%);
}
.refine {
    display: flex;
    justify-content: space-between;
    color: #858585;
    padding: 0 14px 0 12px;
}
.refine button {
    width: 198px;
    height: 30px;
    border: 1px solid #666;
    border-radius: 4px;
    background: #585858;
}
.scroll {
    width: 27px;
    display: flex;
    flex-direction: column;
    align-items: center;
    justify-content: space-between;
    padding: 16px 0 14px;
    background: #505050;
}
.scroll i {
    width: 21px;
    height: 288px;
    margin-bottom: 46px;
    background: #737373;
}
.scroll .chevron { opacity: 0.7; }
.up { transform: scaleY(-1); }
.prop-foot {
    height: 42px;
    display: flex;
    justify-content: flex-end;
    gap: 16px;
    padding-right: 45px;
    border-top: 1px solid #4a4a4a;
}
.prop-foot button { width: 22px; margin: 0 5px; }
.prop-foot .seen {
    width: 47px;
    margin: 0 -5px;
    background: #434343;
}

/* layers */
.layers {
    flex: 1;
    min-height: 0;
    margin: 0;
}
.layer-row {
    height: 48px;
    flex: none;
    display: flex;
    align-items: center;
    padding: 2px 75px 0 6px;
    border-bottom: 1px solid #4a4a4a;
}
.filter-row { height: 53px; padding-top: 8px; }
.layer-row.last { height: 53px; border: 0; padding-bottom: 3px; }
.kind { width: 147px; }
.kind .find {
    width: 20px;
    height: 20px;
    margin-left: 12px;
}
.kind select { padding-left: 6px; }
.blend { width: 200px; }
.filters {
    flex: 1;
    display: flex;
    align-items: center;
    justify-content: space-between;
    padding-left: 28px;
}
.toggle {
    width: 15px;
    height: 28px;
    margin-left: 9px;
    border-radius: 8px;
    background: radial-gradient(circle at 50% 7px, #e6e6e6 7px, #454545 8px);
}
.value-label {
    margin-left: auto;
    margin-right: 13px;
}
.lock-label { padding-left: 3px; }
.locks {
    display: flex;
    align-items: center;
    gap: 14px;
    margin-left: 20px;
}
.layer-wrap {
    flex: 1;
    min-height: 0;
    display: flex;
    background: #565656;
}
.layer-list {
    flex: 1;
    margin: 0;
    padding: 0;
    list-style: none;
}
.layer-list li {
    height: 70px;
    display: flex;
    background: #5d5d5d;
    border-bottom: 1px solid #4a4a4a;
}
.see {
    width: 52px;
    padding-right: 2px;
    border-right: 1px solid #4f4f4f;
}
.layer {
    flex: 1;
    display: flex;
    align-items: center;
    gap: 12px;
    padding: 2px 26px 0 2px;
}
.selected { background: #757575; }
.thumb { width: 64px; height: 62px; }
.corner { fill: none; stroke: #e6e6e6; stroke-width: 2; }
.locked { margin-left: auto; }
.layer-scroll {
    width: 27px;
    background: #525252;
}
.layer-foot {
    height: 42px;
    flex: none;
    display: flex;
    align-items: center;
    justify-content: flex-end;
    gap: 13px;
    padding-right: 43px;
    border-top: 1px solid #4a4a4a;
}
.layer-foot button {
    position: relative;
    width: 33px;
    height: 32px;
}
.fx {
    font-size: 24px;
    font-style: italic;
}
.has-menu::after {
    content: "";
    position: absolute;
    right: -3px;
    bottom: 2px;
    border: solid transparent;
    border-width: 4px 4px 0;
    border-top-color: #dedede;
}

/* overlays */
.key-tag {
    position: absolute;
    left: 118px;
    bottom: 214px;
    width: 454px;
    height: 154px;
}
.key-tag svg { display: block; }
.card { filter: drop-shadow(1px 2px 2px rgba(0, 0, 0, 0.3)); }
.key-tag span {
    position: absolute;
    left: 51px;
    top: 58px;
    color: #505050;
    font-family: "DejaVu Sans", sans-serif;
    font-size: 80px;
    font-weight: 200;
    line-height: 96px;
    -webkit-text-stroke: 2px #505050;
    stroke-linejoin: round;
}
.caption {
    position: absolute;
    left: 0;
    right: 0;
    bottom: 76px;
    text-align: center;
    color: #fff;
    font-family: Inter, "Noto Sans CJK SC", sans-serif;
    font-size: 80px;
    font-weight: 600;
    line-height: 110px;
    -webkit-text-stroke: 4px #000;
    paint-order: stroke fill;
}
.watermark {
    position: absolute;
    left: -18px;
    bottom: 66px;
    color: #707070;
    font-size: 22px;
}
.play-dot {
    position: absolute;
    left: 181px;
    bottom: -18px;
    width: 26px;
    height: 26px;
    border: 4px solid #35609c;
    border-radius: 50%;
    background: #3a80e6;
}
```
